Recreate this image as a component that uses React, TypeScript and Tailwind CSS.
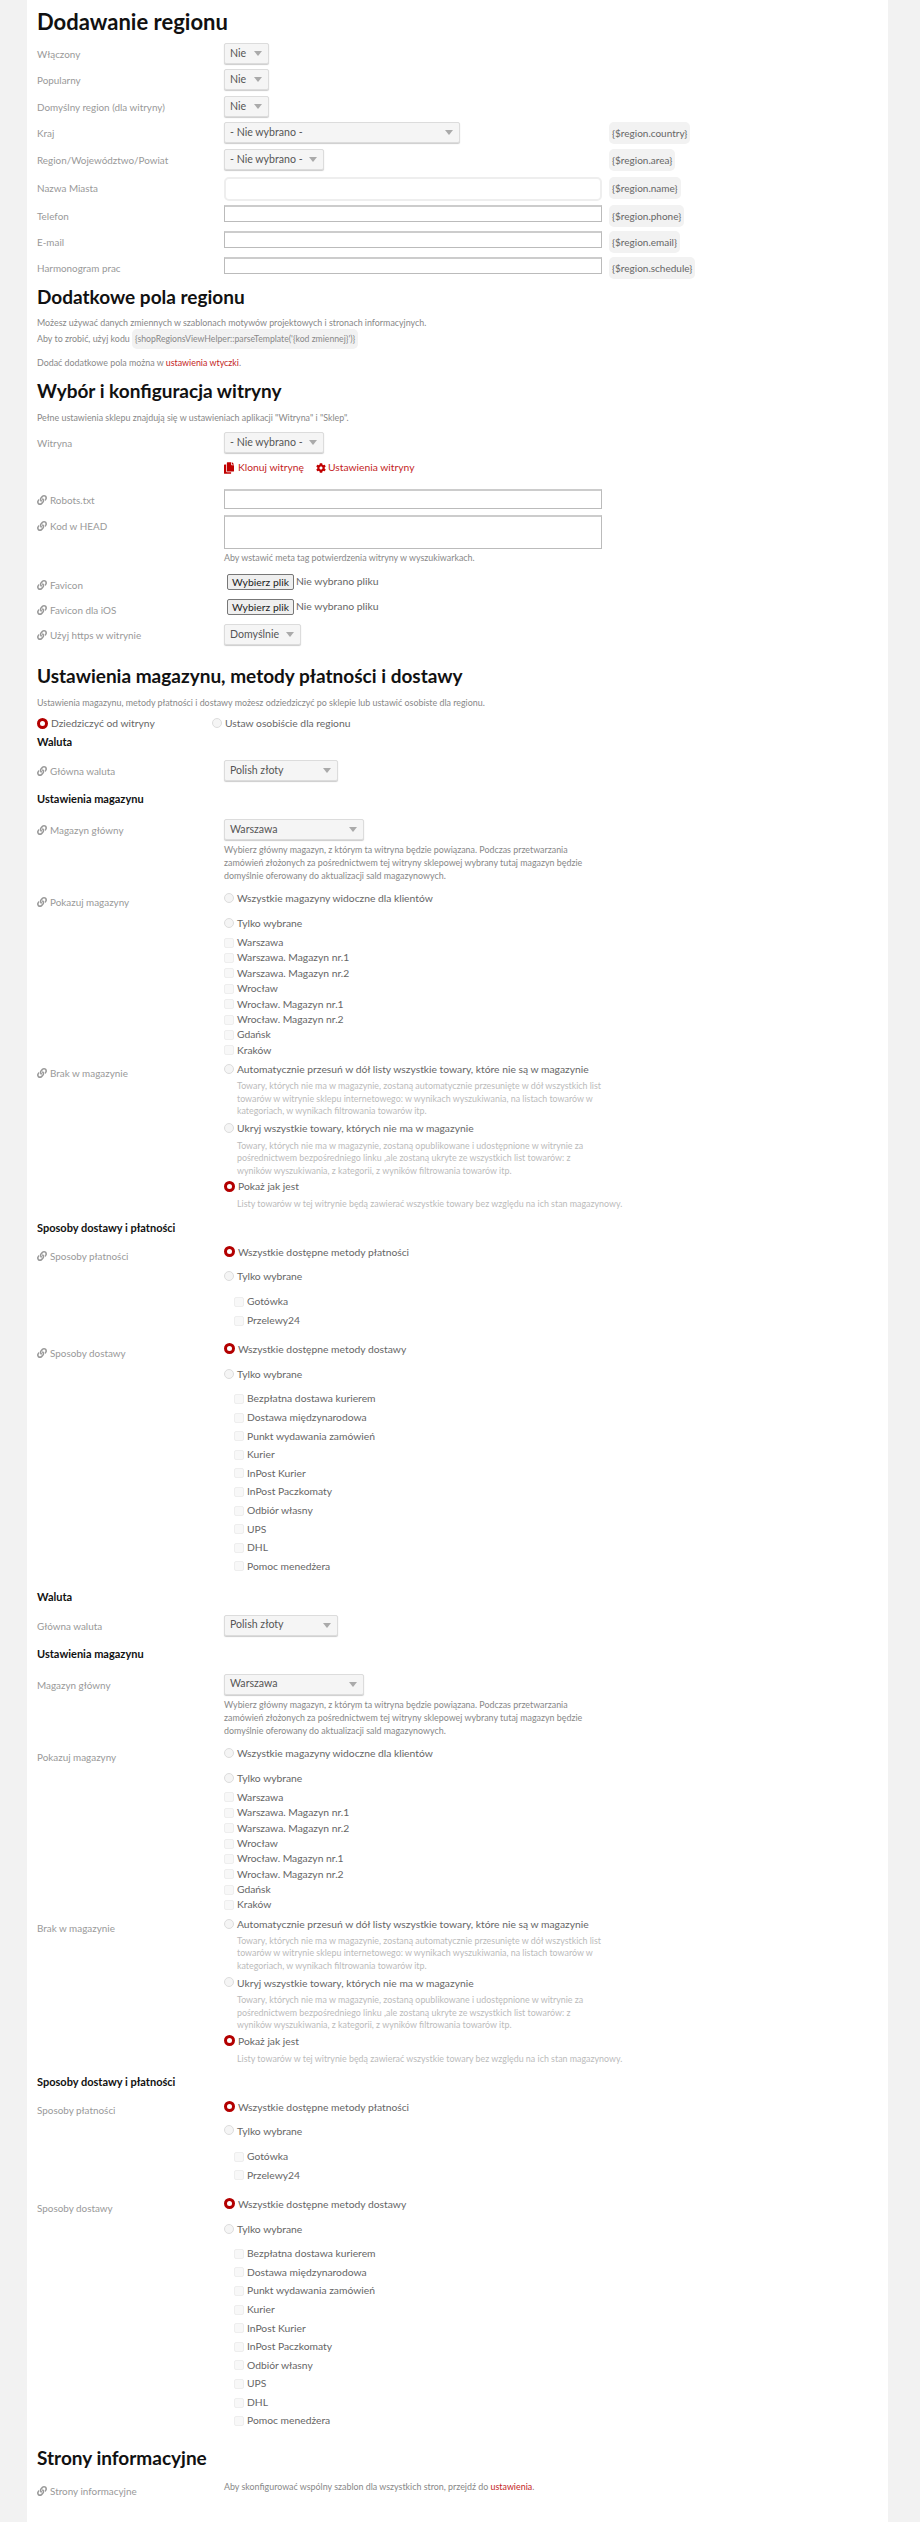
import { FaLink, FaCopy, FaCog } from 'react-icons/fa';

const Select = ({ text, width }: { text: string; width: string }) => (
    <div className={`h-[21px] ${width} flex items-center justify-between pl-[5px] pr-[6px] bg-[#f5f5f5] border border-[#dcdcdc] rounded-[2px] shadow-[0_1px_1px_#ccc] text-[#555] text-[10.6px] whitespace-nowrap`}>
        <span>{text}</span>
        <span className="w-0 h-0 border-x-[4px] border-x-transparent border-t-[5px] border-t-[#aaa]"></span>
    </div>
);

const Label = ({ text, linked }: { text: string; linked?: boolean }) => (
    <div className="w-[187px] h-[21px] shrink-0 flex items-start gap-[3px] leading-[22px] text-[9.9px] text-[#999] whitespace-nowrap">
        {linked && <FaLink className="w-[10px] h-[22px] text-[#999] shrink-0" />}
        <span>{text}</span>
    </div>
);

const Chip = ({ text }: { text: string }) => (
    <span className="ml-[7px] h-[22px] px-[3px] leading-[22px] bg-[#f2f2f2] rounded-[5px] text-[10px] text-[#666] whitespace-nowrap">{text}</span>
);

const Radio = ({ checked }: { checked?: boolean }) => (
    checked
        ? <span className="w-[11px] h-[11px] shrink-0 rounded-full border-[3px] border-[#b30000] bg-white -mt-[2px]"></span>
        : <span className="w-[10px] h-[10px] shrink-0 rounded-full border border-[#ddd] bg-[#f5f5f5] -mt-[2px]"></span>
);

const RadioRow = ({ text, checked, className }: { text: string; checked?: boolean; className: string }) => (
    <div className={`h-[16px] flex items-center gap-[3px] text-[10.3px] text-[#666] whitespace-nowrap ${className}`}>
        <Radio checked={checked} />
        <span>{text}</span>
    </div>
);

const Check = ({ text, rowHeight }: { text: string; rowHeight: string }) => (
    <div className={`${rowHeight} flex items-center gap-[3px] text-[10.3px] text-[#666] whitespace-nowrap`}>
        <span className="w-[10px] h-[10px] shrink-0 rounded-[2px] border border-[#eee] bg-[#f8f8f8]"></span>
        <span>{text}</span>
    </div>
);

const Hint = ({ children, className }: { children: React.ReactNode; className: string }) => (
    <div className={`w-[378px] text-[8.9px] leading-[12.5px] text-[#bbb] ${className}`}>{children}</div>
);

const warehouses = ['Warszawa', 'Warszawa. Magazyn nr.1', 'Warszawa. Magazyn nr.2', 'Wrocław', 'Wrocław. Magazyn nr.1', 'Wrocław. Magazyn nr.2', 'Gdańsk', 'Kraków'];
const payments = ['Gotówka', 'Przelewy24'];
const deliveries = ['Bezpłatna dostawa kurierem', 'Dostawa międzynarodowa', 'Punkt wydawania zamówień', 'Kurier', 'InPost Kurier', 'InPost Paczkomaty', 'Odbiór własny', 'UPS', 'DHL', 'Pomoc menedżera'];

const Bold = ({ text, className }: { text: string; className: string }) => (
    <div className={`h-[14px] leading-[14px] text-[11px] font-bold text-[#111] ${className}`}>{text}</div>
);

function WarehouseBlock({ linked, className }: { linked?: boolean; className: string }) {
    return (
        <div className={className}>
            <Bold text="Waluta" className="" />
            <div className="mt-[11px] flex">
                <Label text="Główna waluta" linked={linked} />
                <Select text="Polish złoty" width="w-[114px]" />
            </div>
            <Bold text="Ustawienia magazynu" className="mt-[11px]" />
            <div className="mt-[13px] flex">
                <Label text="Magazyn główny" linked={linked} />
                <div>
                    <Select text="Warszawa" width="w-[140px]" />
                    <div className="mt-[3px] w-[378px] text-[8.9px] leading-[13px] text-[#888]">
                        Wybierz główny magazyn, z którym ta witryna będzie powiązana. Podczas przetwarzania zamówień złożonych za pośrednictwem tej witryny sklepowej wybrany tutaj magazyn będzie domyślnie oferowany do aktualizacji sald magazynowych.
                    </div>
                </div>
            </div>
            <div className="mt-[9px] flex">
                <Label text="Pokazuj magazyny" linked={linked} />
                <div>
                    <RadioRow text="Wszystkie magazyny widoczne dla klientów" className="" />
                    <RadioRow text="Tylko wybrane" className="mt-[9px]" />
                    <div className="mt-[3px]">
                        {warehouses.map((w) => <Check key={w} text={w} rowHeight="h-[15.4px]" />)}
                    </div>
                </div>
            </div>
            <div className="mt-[4px] flex">
                <Label text="Brak w magazynie" linked={linked} />
                <div>
                    <RadioRow text="Automatycznie przesuń w dół listy wszystkie towary, które nie są w magazynie" className="" />
                    <Hint className="mt-[2px] pl-[13px]">Towary, których nie ma w magazynie, zostaną automatycznie przesunięte w dół wszystkich list towarów w witrynie sklepu internetowego: w wynikach wyszukiwania, na listach towarów w kategoriach, w wynikach filtrowania towarów itp.</Hint>
                    <RadioRow text="Ukryj wszystkie towary, których nie ma w magazynie" className="mt-[3px]" />
                    <Hint className="mt-[3px] pl-[13px]">Towary, których nie ma w magazynie, zostaną opublikowane i udostępnione w witrynie za pośrednictwem bezpośredniego linku ,ale zostaną ukryte ze wszystkich list towarów: z wyników wyszukiwania, z kategorii, z wyników filtrowania towarów itp.</Hint>
                    <RadioRow text="Pokaż jak jest" checked className="mt-[2px]" />
                    <Hint className="mt-[3px] pl-[13px] whitespace-nowrap">Listy towarów w tej witrynie będą zawierać wszystkie towary bez względu na ich stan magazynowy.</Hint>
                </div>
            </div>
            <Bold text="Sposoby dostawy i płatności" className="mt-[10px]" />
            <div className="mt-[10px] flex">
                <Label text="Sposoby płatności" linked={linked} />
                <div>
                    <RadioRow text="Wszystkie dostępne metody płatności" checked className="" />
                    <RadioRow text="Tylko wybrane" className="mt-[8px]" />
                    <div className="mt-[8px] pl-[10px]">
                        {payments.map((p) => <Check key={p} text={p} rowHeight="h-[18.6px]" />)}
                    </div>
                </div>
            </div>
            <div className="mt-[12px] flex">
                <Label text="Sposoby dostawy" linked={linked} />
                <div>
                    <RadioRow text="Wszystkie dostępne metody dostawy" checked className="" />
                    <RadioRow text="Tylko wybrane" className="mt-[9px]" />
                    <div className="mt-[7px] pl-[10px]">
                        {deliveries.map((d) => <Check key={d} text={d} rowHeight="h-[18.6px]" />)}
                    </div>
                </div>
            </div>
        </div>
    );
}

const textInput = "block w-[378px] border border-[#bbb] border-t-2 border-t-[#ccc] bg-white";

export default function App() {
    return (
        <div className="min-h-[2522px] flex bg-[#f2f2f2] font-['Lato','Liberation_Sans',sans-serif] text-[#666]">
            <div className="ml-[27px] w-[861px] bg-white pl-[10px] pt-[9px]">
                <h1 className="h-[26px] leading-[26px] text-[22px] font-bold text-[#111]">Dodawanie regionu</h1>

                <div className="mt-[8px] flex"><Label text="Włączony" /><Select text="Nie" width="w-[45px]" /></div>
                <div className="mt-[5px] flex"><Label text="Popularny" /><Select text="Nie" width="w-[45px]" /></div>
                <div className="mt-[6px] flex"><Label text="Domyślny region (dla witryny)" /><Select text="Nie" width="w-[45px]" /></div>
                <div className="mt-[5px] flex items-start">
                    <Label text="Kraj" />
                    <div className="w-[378px]"><Select text="- Nie wybrano -" width="w-[236px]" /></div>
                    <Chip text="{$region.country}" />
                </div>
                <div className="mt-[5px] flex items-start">
                    <Label text="Region/Województwo/Powiat" />
                    <div className="w-[378px]"><Select text="- Nie wybrano -" width="w-[100px]" /></div>
                    <Chip text="{$region.area}" />
                </div>
                <div className="mt-[6px] flex items-start">
                    <Label text="Nazwa Miasta" />
                    <input className="block w-[378px] h-[24px] border-2 border-[#eee] rounded-[5px] bg-white" />
                    <Chip text="{$region.name}" />
                </div>
                <div className="mt-[4px] flex items-start">
                    <Label text="Telefon" />
                    <input className={`${textInput} h-[17px]`} />
                    <Chip text="{$region.phone}" />
                </div>
                <div className="mt-[4px] flex items-start">
                    <Label text="E-mail" />
                    <input className={`${textInput} h-[17px]`} />
                    <Chip text="{$region.email}" />
                </div>
                <div className="mt-[4px] flex items-start">
                    <Label text="Harmonogram prac" />
                    <input className={`${textInput} h-[17px]`} />
                    <Chip text="{$region.schedule}" />
                </div>

                <h2 className="mt-[6px] h-[24px] leading-[24px] text-[19px] font-bold text-[#111]">Dodatkowe pola regionu</h2>
                <p className="mt-[7px] h-[13px] leading-[13px] text-[8.9px] text-[#888]">Możesz używać danych zmiennych w szablonach motywów projektowych i stronach informacyjnych.</p>
                <p className="h-[20px] leading-[20px] text-[8.9px] text-[#888]">
                    Aby to zrobić, użyj kodu <code className="inline-block px-[3px] bg-[#f2f2f2] rounded-[5px] text-[8.7px] font-['Lato',sans-serif]">{"{shopRegionsViewHelper::parseTemplate('{kod zmiennej}')}"}</code>
                </p>
                <p className="mt-[7px] h-[14px] leading-[14px] text-[8.9px] text-[#888]">Dodać dodatkowe pola można w <span className="text-[#c41e1e]">ustawienia wtyczki</span>.</p>

                <h2 className="mt-[9px] h-[24px] leading-[24px] text-[19px] font-bold text-[#111]">Wybór i konfiguracja witryny</h2>
                <p className="mt-[8px] h-[14px] leading-[14px] text-[8.9px] text-[#888]">Pełne ustawienia sklepu znajdują się w ustawieniach aplikacji "Witryna" i "Sklep".</p>
                <div className="mt-[7px] flex"><Label text="Witryna" /><Select text="- Nie wybrano -" width="w-[100px]" /></div>
                <div className="mt-[7px] ml-[187px] h-[16px] flex items-center text-[10.3px] text-[#c41e1e]">
                    <FaCopy className="w-[10px] h-[14px] text-[#c00000]" />
                    <span className="ml-[4px]">Klonuj witrynę</span>
                    <FaCog className="ml-[12px] w-[10px] h-[12px] text-[#c00000]" />
                    <span className="ml-[2px]">Ustawienia witryny</span>
                </div>
                <div className="mt-[13px] flex">
                    <Label text="Robots.txt" linked />
                    <input className={`${textInput} h-[20px]`} />
                </div>
                <div className="mt-[5px] flex">
                    <Label text="Kod w HEAD" linked />
                    <textarea className={`${textInput} h-[34px] resize-none`}></textarea>
                </div>
                <div className="mt-[2px] ml-[187px] h-[13px] leading-[13px] text-[8.9px] text-[#888]">Aby wstawić meta tag potwierdzenia witryny w wyszukiwarkach.</div>
                <div className="mt-[10px] flex">
                    <Label text="Favicon" linked />
                    <div className="h-[16px] pl-[3px] flex items-center text-[10.4px] text-[#666] whitespace-nowrap">
                        <span className="h-[16px] px-[4px] leading-[14px] border border-[#777] rounded-[2px] bg-[#efefef] text-[#222]">Wybierz plik</span>
                        <span className="ml-[2px]">Nie wybrano pliku</span>
                    </div>
                </div>
                <div className="mt-[4px] flex">
                    <Label text="Favicon dla iOS" linked />
                    <div className="h-[16px] pl-[3px] flex items-center text-[10.4px] text-[#666] whitespace-nowrap">
                        <span className="h-[16px] px-[4px] leading-[14px] border border-[#777] rounded-[2px] bg-[#efefef] text-[#222]">Wybierz plik</span>
                        <span className="ml-[2px]">Nie wybrano pliku</span>
                    </div>
                </div>
                <div className="mt-[4px] flex"><Label text="Użyj https w witrynie" linked /><Select text="Domyślnie" width="w-[77px]" /></div>

                <h2 className="mt-[19px] h-[24px] leading-[24px] text-[19px] font-bold text-[#111]">Ustawienia magazynu, metody płatności i dostawy</h2>
                <p className="mt-[8px] h-[14px] leading-[14px] text-[8.9px] text-[#888]">Ustawienia magazynu, metody płatności i dostawy możesz odziedziczyć po sklepie lub ustawić osobiste dla regionu.</p>
                <div className="mt-[6px] flex">
                    <RadioRow text="Dziedziczyć od witryny" checked className="w-[175px]" />
                    <RadioRow text="Ustaw osobiście dla regionu" className="" />
                </div>

                <WarehouseBlock linked className="mt-[3px]" />
                <WarehouseBlock className="mt-[14px]" />

                <h2 className="mt-[15px] h-[24px] leading-[24px] text-[19px] font-bold text-[#111]">Strony informacyjne</h2>
                <div className="mt-[10px] flex">
                    <Label text="Strony informacyjne" linked />
                    <div className="h-[14px] leading-[14px] text-[8.9px] text-[#888]">Aby skonfigurować wspólny szablon dla wszystkich stron, przejdź do <span className="text-[#c41e1e]">ustawienia</span>.</div>
                </div>
            </div>
        </div>
    );
}
